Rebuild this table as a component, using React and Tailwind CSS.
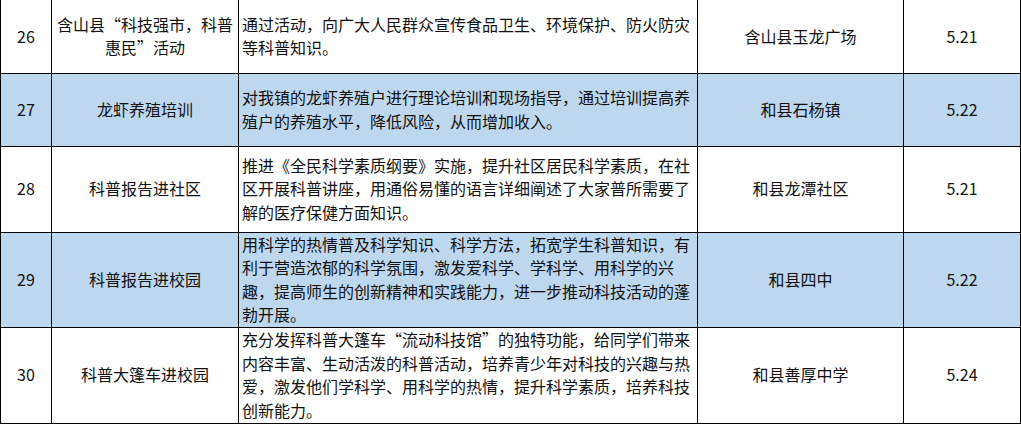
const rows = [
  {
    no: "26",
    name: ["含山县“科技强市，科普", "惠民”活动"],
    desc: ["通过活动，向广大人民群众宣传食品卫生、环境保护、防火防灾", "等科普知识。"],
    place: "含山县玉龙广场",
    date: "5.21",
    blue: false,
    h: "h-[73px]",
  },
  {
    no: "27",
    name: ["龙虾养殖培训"],
    desc: ["对我镇的龙虾养殖户进行理论培训和现场指导，通过培训提高养", "殖户的养殖水平，降低风险，从而增加收入。"],
    place: "和县石杨镇",
    date: "5.22",
    blue: true,
    h: "h-[73px]",
  },
  {
    no: "28",
    name: ["科普报告进社区"],
    desc: [
      "推进《全民科学素质纲要》实施，提升社区居民科学素质，在社",
      "区开展科普讲座，用通俗易懂的语言详细阐述了大家普所需要了",
      "解的医疗保健方面知识。",
    ],
    place: "和县龙潭社区",
    date: "5.21",
    blue: false,
    h: "h-[86px]",
  },
  {
    no: "29",
    name: ["科普报告进校园"],
    desc: [
      "用科学的热情普及科学知识、科学方法，拓宽学生科普知识，有",
      "利于营造浓郁的科学氛围，激发爱科学、学科学、用科学的兴",
      "趣，提高师生的创新精神和实践能力，进一步推动科技活动的蓬",
      "勃开展。",
    ],
    place: "和县四中",
    date: "5.22",
    blue: true,
    h: "h-[95px]",
  },
  {
    no: "30",
    name: ["科普大篷车进校园"],
    desc: [
      "充分发挥科普大篷车“流动科技馆”的独特功能，给同学们带来",
      "内容丰富、生动活泼的科普活动，培养青少年对科技的兴趣与热",
      "爱，激发他们学科学、用科学的热情，提升科学素质，培养科技",
      "创新能力。",
    ],
    place: "和县善厚中学",
    date: "5.24",
    blue: false,
    h: "h-[96px]",
  },
];

const cell = "border border-black align-middle p-0";

export default function App() {
  return (
    <div className="w-[1021px] h-[424px] overflow-hidden bg-white font-['Noto_Sans_CJK_SC',sans-serif] text-[16px] leading-[23.5px] text-[#111]">
      <table className="w-[1020px] table-fixed border-collapse">
        <colgroup>
          <col className="w-[51px]" />
          <col className="w-[187px]" />
          <col className="w-[459px]" />
          <col className="w-[206px]" />
          <col className="w-[117px]" />
        </colgroup>
        <tbody>
          {rows.map((r, i) => (
            <tr key={r.no} className={`${r.h} ${r.blue ? "bg-[#bdd7ee]" : "bg-white"}`}>
              <td className={`${cell} text-center ${i === 0 ? "border-t-0" : ""}`}>{r.no}</td>
              <td className={`${cell} text-center ${i === 0 ? "border-t-0" : ""}`}>
                {r.name.map((l, j) => (
                  <div key={j}>{l}</div>
                ))}
              </td>
              <td className={`${cell} pl-[3px] text-left ${i === 0 ? "border-t-0" : ""}`}>
                {r.desc.map((l, j) => (
                  <div key={j} className="whitespace-nowrap">{l}</div>
                ))}
              </td>
              <td className={`${cell} text-center ${i === 0 ? "border-t-0" : ""}`}>{r.place}</td>
              <td className={`${cell} text-center ${i === 0 ? "border-t-0" : ""}`}>{r.date}</td>
            </tr>
          ))}
        </tbody>
      </table>
    </div>
  );
}
